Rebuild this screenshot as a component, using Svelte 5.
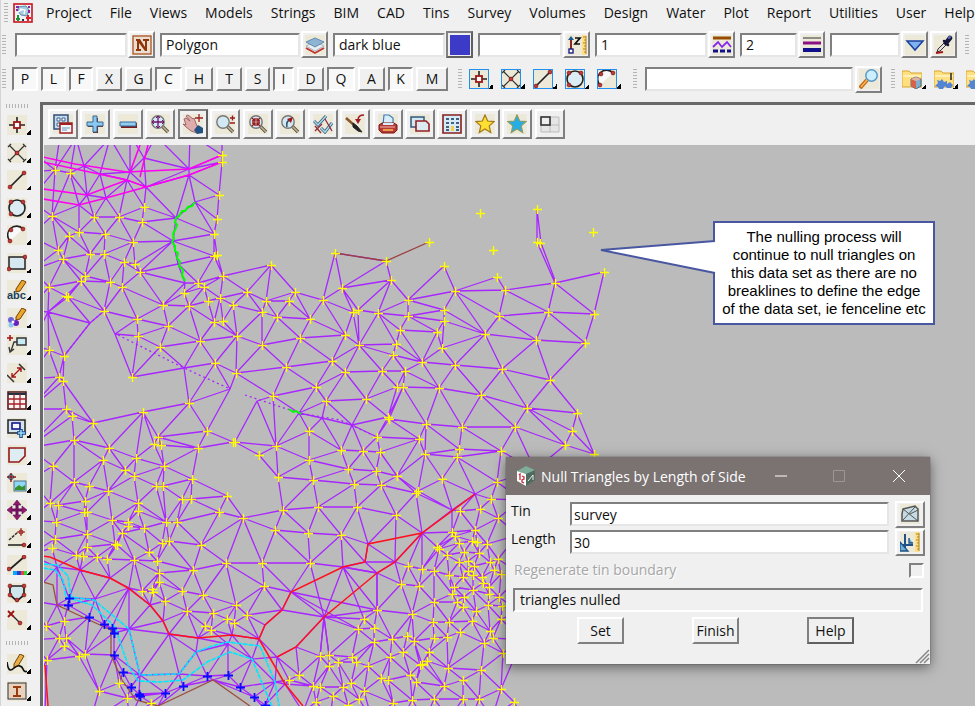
<script>
  const menus = [
    "Project", "File", "Views", "Models", "Strings", "BIM", "CAD", "Tins", "Survey",
    "Volumes", "Design", "Water", "Plot", "Report", "Utilities", "User", "Help",
  ];

  // Attribute bar: a text box and the picker next to it
  let attributes = [
    { label: "Name", value: "", width: 112, icon: "name" },
    { label: "Model", value: "Polygon", width: 140, icon: "layers" },
    { label: "Colour", value: "dark blue", width: 112, icon: "swatch" },
    { label: "Height", value: "", width: 84, icon: "height" },
    { label: "Line style", value: "1", width: 112, icon: "linestyle" },
    { label: "Weight", value: "2", width: 57, icon: "weight" },
    { label: "Tinable", value: "", width: 70, icon: "down" },
  ];

  let snaps = [
    { key: "P", width: 26, on: true },
    { key: "L", width: 25, on: true },
    { key: "F", width: 24, on: true },
    { key: "X", width: 26, on: false },
    { key: "G", width: 27, on: false },
    { key: "C", width: 27, on: true },
    { key: "H", width: 28, on: false },
    { key: "T", width: 26, on: false },
    { key: "S", width: 25, on: false },
    { key: "I", width: 21, on: true },
    { key: "D", width: 27, on: false },
    { key: "Q", width: 28, on: true },
    { key: "A", width: 27, on: false },
    { key: "K", width: 25, on: true },
    { key: "M", width: 32, on: false },
  ];

  const cadTools = ["point", "cross", "line", "circle", "arc"];
  const folders = ["folderbox", "foldergear", "foldergear"];
  const viewTools = [
    "views", "plus", "minus", "zoomfit", "pan", "zoomscale", "zoomin", "zoomprev",
    "toggle", "brush", "print", "copy", "grid", "star", "bluestar", "tile",
  ];
  const sideTools = [
    "point", "cross", "line", "circle", "arc", "rect", "text", "colour", "leader", "dimension",
    "table", "boxplus", "polygon", "image", "move", "offset", "linecolour", "shield", "delete",
  ];
  const editTools = ["pencil", "interface"];

  const beige = '<rect width="20" height="20" fill="#ece9d8"/>';
  const dot = (x, y) => `<circle cx="${x}" cy="${y}" r="1.9" fill="#c03c3c" stroke="#7a1010" stroke-width=".7"/>`;
  const lens = '<path d="M12 12l6 6" stroke="#555" stroke-width="3.4"/><path d="M12 12l6 6" stroke="#c9b183" stroke-width="1.6"/><circle cx="8" cy="8" r="6.2" fill="#d2e8f4" stroke="#777" stroke-width="1.4"/>';
  const folder = '<path d="M0 2h7l2 2h11v14H0z" fill="#ffe080" stroke="#d9a52c"/><path d="M1 7h18" stroke="#fff0b8" stroke-width="2"/>';
  const starPath = "M10 1l2.7 6 6.3.6-4.800 4.300 1.500 6.600L10 15l-5.700 3.500 1.500-6.600L1 7.600 7.300 7z";

  const icons = {
    logo: '<rect x="1" y="1" width="18" height="18" fill="#eef3f6" stroke="#c8141e" stroke-width="1.6"/><path d="M5 4l8-1 3 4-2 6-6-1-3-4z" fill="#a5cde0" stroke="#5b8faa"/><path d="M7 6l5 1-1 4M5 9l5-3" stroke="#fff" stroke-width="1.4" fill="none"/><path d="M3 4h3M3 7h2M15 4h2M16 7v3" stroke="#8d25a8" stroke-width="2"/><path d="M5 12v6M3 16h4" stroke="#1a9436" stroke-width="2"/><path d="M13 15h5M15 12v6" stroke="#df2027" stroke-width="2"/><path d="M9 17h2" stroke="#234" stroke-width="2"/>',
    name: beige + '<rect x="1" y="1" width="18" height="18" fill="#eaded2" stroke="#a74716" stroke-width="1.2"/><path d="M4 4h4l5 8V6h-2V4h6v2h-2v10h-2L7 8v6h2v2H4v-2h1V6H4z" fill="#8f3507"/>',
    layers: beige + '<path d="M1 13l9 5 9-5" fill="none" stroke="#c23330" stroke-width="1.800"/><path d="M1 11l9-4 9 4-9 5z" fill="#e9f0f4" stroke="#aab8c4"/><path d="M1 7l9-4 9 4-9 5z" fill="#8eb4d4" stroke="#638cb0"/>',
    swatch: '<rect width="20" height="20" fill="#3b3bc8"/>',
    height: beige + '<path d="M4 4v11" stroke="#7b1212" stroke-width="1.800"/><path d="M1 5l3-4 3 4z" fill="#1c5a8c"/><rect x="2" y="14" width="4" height="4" fill="#fff" stroke="#10107a" stroke-width="1.300"/><path d="M8 3h5L8 9h5" fill="none" stroke="#111" stroke-width="1.700"/><path d="M15 0h4v20h-4z" fill="#ffe08a"/><path d="M19 1v18M16 2h3M17 5h2M16 8h3M17 11h2M16 14h3M17 17h2" stroke="#b38318"/>',
    linestyle: beige + '<path d="M1 3h18" stroke="#994c00" stroke-width="3"/><path d="M1 12l5-5 4 5 5-5 4 5" fill="none" stroke="#8426f0" stroke-width="1.800"/><path d="M1 16h5m2 0h5m2 0h4" stroke="#10108c" stroke-width="3"/>',
    weight: beige + '<path d="M1 3h18" stroke="#333"/><path d="M1 8h18" stroke="#8b1085" stroke-width="3"/><path d="M1 15h18" stroke="#10108c" stroke-width="4"/>',
    down: beige + '<path d="M2 6h16l-8 9z" fill="#80b2f0" stroke="#1b409f" stroke-width="1.500"/>',
    dropper: beige + '<path d="M3 17l1-3 7-7 2 2-7 7z" fill="#eadede" stroke="#333"/><path d="M10 6l4 4" stroke="#161638" stroke-width="2.500" stroke-linecap="round"/><path d="M12 8l4-5" stroke="#161638" stroke-width="4.500" stroke-linecap="round"/><path d="M15 3l1-1" stroke="#5c6cc8" stroke-width="2" stroke-linecap="round"/><path d="M2 18l7-1" stroke="#a3161e" stroke-width="2"/>',
    search: beige + '<path d="M8 11l-7 8" stroke="#c16912" stroke-width="4"/><path d="M8 11l-6 7" stroke="#ffb355" stroke-width="1.500"/><circle cx="12.500" cy="6.500" r="5.700" fill="#cdeeff" stroke="#5799cb" stroke-width="1.500"/>',
    point: beige + '<path d="M10 2v16M2 10h16" stroke="#222" stroke-width="1.600"/><rect x="7" y="7" width="6" height="6" fill="#fff" stroke="#a01616" stroke-width="1.800"/>',
    cross: beige + '<path d="M3 3l14 14M17 3L3 17M1 4l3-3M16 1l3 3M1 16l3 3M16 19l3-3" stroke="#333" stroke-width="1.200"/>' + dot(10, 10),
    line: beige + '<path d="M3 17L17 3" stroke="#222" stroke-width="1.700"/>' + dot(3, 17) + dot(17, 3),
    circle: beige + '<circle cx="10" cy="10" r="8" fill="#dcecf5" stroke="#222" stroke-width="1.600"/>' + dot(4, 4) + dot(16, 4) + dot(4, 16),
    arc: beige + '<path d="M3 16A8 8 0 0 1 16 4" fill="#f7f9fb" stroke="#222" stroke-width="1.600"/>' + dot(3, 16) + dot(4, 5) + dot(16, 4),
    rect: beige + '<rect x="2" y="4" width="16" height="12" fill="#d5e7ef" stroke="#222" stroke-width="1.500"/>' + dot(18, 4) + dot(2, 16),
    text: beige + '<path d="M9 9l6-9 4 2-6 9-4 1z" fill="#eaa52a" stroke="#704004"/><text x="0" y="19" font-family="Liberation Sans" font-weight="bold" font-size="11" fill="#173f63">abc</text>',
    colour: beige + '<path d="M9 9l6-9 4 2-6 9-4 1z" fill="#eaa52a" stroke="#704004"/><circle cx="4" cy="12" r="3" fill="#6a63d9"/><circle cx="9" cy="15" r="3" fill="#6a20c0"/><circle cx="4" cy="17" r="2.500" fill="#8cc8f7"/><circle cx="6" cy="14" r="1.500" fill="#fff"/>',
    leader: beige + '<path d="M3 0v6M0 3h6" stroke="#a31111" stroke-width="1.500"/><rect x="10" y="3" width="9" height="7" fill="#c9eaf4" stroke="#333" stroke-width="1.500"/><path d="M10 7H7l-3 9M2 12l1 5 4-3" fill="none" stroke="#333" stroke-width="1.300"/>',
    dimension: beige + '<path d="M12 1l6 6M0 12l7 7" stroke="#333" stroke-width="1.500"/><path d="M5 14l9-9M5 10v4h4M10 5h4v4" fill="none" stroke="#a81515" stroke-width="1.400"/>',
    table: beige + '<path d="M1 2h18v17H1z" fill="#fff3ef" stroke="#4a1010" stroke-width="1.500"/><path d="M1 4h18" stroke="#203040" stroke-width="2"/><path d="M7 4v15M13 4v15M1 9h18M1 14h18" stroke="#a31f2a" stroke-width="1.300"/>',
    boxplus: beige + '<rect x="1" y="2" width="17" height="13" fill="#d4e5ee" stroke="#222" stroke-width="1.500"/><rect x="5" y="5" width="8" height="6" fill="#f6f6ff" stroke="#16168a" stroke-width="1.600"/><path d="M14 11v9M10 15h9" stroke="#164a8b" stroke-width="3.500"/><path d="M14 12v7M11 15h7" stroke="#9edbfa" stroke-width="1.500"/>',
    polygon: beige + '<path d="M2 3h16v8l-6 6H2z" fill="#deedf1" stroke="#941818" stroke-width="1.600"/>',
    image: beige + '<path d="M4 0v9M0 4h9" stroke="#8d1717" stroke-width="1.500"/><circle cx="4" cy="4" r="2.500" fill="none" stroke="#204060"/><rect x="7" y="8" width="12" height="10" fill="#8fd7f7" stroke="#527084"/><path d="M8 15l4-3 3 2 3-2v5H8z" fill="#37922b"/>',
    move: beige + '<path d="M10 3v14M3 10h14" stroke="#70105e" stroke-width="3"/><path d="M10 0l4 5H6zM10 20l4-5H6zM0 10l5-4v8zM20 10l-5-4v8z" fill="#991667" stroke="#4a1466" stroke-width=".6"/>',
    offset: beige + '<path d="M2 12l9-8" stroke="#333" stroke-dasharray="3 1" stroke-width="1.500"/><path d="M1 17h16" stroke="#333" stroke-width="1.700"/><path d="M14 0v8M10 4h8" stroke="#941414"/><circle cx="14" cy="4" r="2" fill="none" stroke="#941414"/>' + dot(17, 17),
    linecolour: beige + '<path d="M2 15L17 2" stroke="#222" stroke-width="1.700"/><path d="M6 16h4v4H6z" fill="#08a6ff"/><path d="M10 16h4v4h-4z" fill="#303cc4"/><path d="M14 16h3v4h-3z" fill="#ef3d4d"/><path d="M17 16h3v4h-3z" fill="#20df2b"/>' + dot(2, 14) + dot(17, 2),
    shield: beige + '<path d="M3 3h14v9l-7 6-7-6z" fill="#cfe6ec" stroke="#222" stroke-width="1.700"/>' + dot(3, 3) + dot(17, 3) + dot(10, 17) + dot(3, 12) + dot(17, 12),
    delete: beige + '<path d="M1 1l6 6M7 1L1 7" stroke="#961111" stroke-width="1.800"/><path d="M7 7l5 5" stroke="#222" stroke-width="1.200"/>' + dot(13, 13),
    pencil: beige + '<path d="M7 10l6-10 4 2-6 10-4 2z" fill="#eaae43" stroke="#6d4412"/><path d="M0 8c1 8 3 10 7 6s8-2 9 1 3 3 4 2" fill="none" stroke="#111" stroke-width="1.700"/>',
    interface: beige + '<rect x="1" y="2" width="18" height="16" fill="#e8d2be" stroke="#333"/><path d="M6 5h8v2h-3v7h3v2H6v-2h3V7H6z" fill="#9c3c0e"/>',
    views: beige + '<rect x="1" y="1" width="14" height="14" fill="#c5ddec" stroke="#334f78" stroke-width="1.500"/><path d="M4 4h3v3H4zM9 4h3v3H9zM4 9h3v3H4z" fill="#fff" stroke="#42638c"/><rect x="7" y="9" width="12" height="10" fill="#eef5fb" stroke="#a02020" stroke-width="1.500"/><path d="M7 10h12" stroke="#a02020" stroke-width="2"/><path d="M9 14h8M9 16h5" stroke="#6f98b5"/>',
    plus: beige + '<path d="M8 4h5v5h5v4h-5v6H8v-6H3V9h5z" fill="#7a1b21"/><path d="M8 2h4v6h6v4h-6v6H8v-6H2V8h6z" fill="#8ac9ef" stroke="#366993"/>',
    minus: beige + '<path d="M3 9h16v5H3z" fill="#7a1b21"/><path d="M2 8h16v4H2z" fill="#91cef0" stroke="#3b6c95"/>',
    zoomfit: beige + lens + '<path d="M8 3v10M3 8h10" stroke="#70106e" stroke-width="1.300"/><path d="M6 4l2-2 2 2M6 12l2 2 2-2M4 6L2 8l2 2M12 6l2 2-2 2" fill="none" stroke="#70106e"/>',
    pan: beige + '<path d="M1 5l2-1 4 3-4-5 2-1 5 4 1-1 3 8 3 3-3 4-6-2-5-4-3-3 3 1z" fill="#dfabab" stroke="#8f5051" stroke-width=".8"/><path d="M11 16l4-5 5 3v5l-6 1z" fill="#235282"/><path d="M16 0v8M12 4h8" stroke="#9a2020" stroke-width="1.300"/>',
    zoomscale: beige + lens + '<path d="M15 4h5M17.500 1.500v5M15 9h5" stroke="#9a1919" stroke-width="1.300"/>',
    zoomin: beige + lens + '<path d="M4 4l3 3M12 4L9 7M4 12l3-3M12 12L9 9M7 4v3H4M9 4v3h3M4 9h3v3M12 9H9v3" stroke="#981515" stroke-width="1.300" fill="none"/>',
    zoomprev: beige + lens + '<path d="M7 13c-1-4 0-6 3-7" stroke="#264d6a" stroke-width="1.500" fill="none"/><path d="M7 5l6-2-2 6z" fill="#9e1818"/>',
    toggle: beige + '<path d="M1 7l4 4 8-9M8 14l4 4 7-9" stroke="#365875" stroke-width="3" fill="none"/><path d="M1 7l4 4 8-9M8 14l4 4 7-9" stroke="#a8dcf0" stroke-width="1.500" fill="none"/><path d="M12 5l7 12M2 17l7-7M2 12l6 7" stroke="#922c3a" stroke-width="1.300"/>',
    brush: beige + '<path d="M1 4l8 7" stroke="#8a5428" stroke-width="2.500"/><path d="M8 9l4 3 5 6-4-1-5-4z" fill="#222" stroke="#222"/><path d="M19 1c-4 0-6 2-6 5" fill="none" stroke="#a11c25" stroke-width="1.500"/><path d="M10 5l3 5 3-5z" fill="#a11c25"/>',
    print: beige + '<path d="M5 11l1-10h5l4 3v7z" fill="#d8eefc" stroke="#3f7cb4" stroke-width="1.200"/><path d="M1 11l3-2h12l3 2v5l-3 3H4l-3-3z" fill="#b9393a" stroke="#7a1616"/><path d="M5 9h11l-1 2H5z" fill="#d8eefc"/><path d="M2 13h15" stroke="#f0b8ae"/><path d="M5 16h10" stroke="#f6c549" stroke-width="1.500"/>',
    copy: beige + '<rect x="1" y="3" width="13" height="10" fill="#d3e7ef" stroke="#31587e" stroke-width="1.500"/><path d="M6 7h10l3 3v7H6z" fill="#dcebf0" stroke="#942027" stroke-width="1.600"/>',
    grid: beige + '<path d="M1 1h18v18H1z" fill="#d6ebf7" stroke="#852020" stroke-width="1.600"/><path d="M4 5h3M9 5h3M14 5h3M4 9h3M9 9h3M14 9h3M4 13h3M14 13h3M4 16h3M14 16h3" stroke="#43607d" stroke-width="2"/><path d="M9 12h3v5H9z" fill="#f5cf45"/>',
    star: beige + `<path d="${starPath}" fill="#ffdf31" stroke="#a17817" stroke-width="1.200"/>`,
    bluestar: beige + `<path d="${starPath}" fill="#23aee7" stroke="#8d9a63" stroke-width="1.200"/>`,
    tile: '<path d="M1 3h18v15H1zM10 3v15M1 11h18" fill="#e5e5e5" stroke="#bbb"/><rect x="1" y="3" width="9" height="8" fill="#eee" stroke="#333" stroke-width="1.600"/>',
    folderbox: folder + '<path d="M9 10l5-2 5 2v7l-5 3-5-3z" fill="#7eafd2" stroke="#476b91"/><path d="M9 10l5 2v8l-5-3z" fill="#da6148"/><path d="M9 10l5-2 5 2-5 2z" fill="#e6b29a"/>',
    foldergear: folder + '<path d="M1 17l3-3-1-3 3 1 2-2 2 3 3-1v3l3-2 3 3-2 3h-4l-2-2-2 3H5l-1-2z" fill="#5385d5"/><path d="M17 4v7" stroke="#222" stroke-width="1.500"/>',
    tin: beige + '<path d="M3 5l12-3 3 3v12H2v-7z" fill="#c6dce5" stroke="#555" stroke-width="1.500"/><path d="M3 5l15 12M15 3L3 16M10 10l8-4" stroke="#555"/>',
    measure: beige + '<path d="M5 2v16M0 13h13" stroke="#1e5288" stroke-width="2"/><path d="M0 10l8 9H0zM9 6v5h4" fill="#6ab0d8" stroke="#1e5288" stroke-width="1.300"/><path d="M15 0h4v20h-4z" fill="#ffdf83"/><path d="M19 1v18M16 2h3M17 5h2M16 8h3M17 11h2M16 14h3M17 17h2" stroke="#b38318"/>',
    app: '<path d="M1 5l9-5 9 4v10l-9 6-9-5z" fill="#4f6b60"/><path d="M1 5l9-5 9 4-9 4z" fill="#80ad98"/><path d="M1 5l9 3v12l-9-5z" fill="#fff"/><path d="M3 9l1-1v6M6 10l2 1v2l-2 1v2l2 1" fill="none" stroke="#d0273b" stroke-width="1.300"/><path d="M12 15l5-6v5" stroke="#e4eee9" fill="none"/>',
  };

  // Survey points, drawn as yellow crosses and used as tin vertices
  const points = [
    [222,155],[222,162],[219,195],[217,219],[214,234],[214,256],[217,255],[55,170],[70,173],[144,207],
    [119,217],[94,217],[52,216],[142,222],[79,232],[69,236],[105,234],[133,242],[58,250],[63,259],
    [90,254],[104,254],[124,262],[135,264],[140,272],[85,276],[81,281],[110,282],[122,287],[49,287],
    [66,296],[68,297],[104,311],[137,319],[168,326],[138,336],[163,305],[184,293],[198,283],[204,287],
    [189,306],[208,301],[220,298],[223,276],[233,305],[214,322],[223,321],[247,292],[262,312],[266,301],
    [277,317],[289,301],[295,292],[271,265],[310,319],[323,300],[335,253],[300,338],[237,336],[200,341],
    [386,261],[444,266],[391,280],[342,288],[455,291],[497,277],[505,290],[555,283],[604,272],[408,300],
    [353,312],[358,310],[378,313],[408,316],[444,310],[444,321],[499,316],[548,312],[594,314],[345,335],
    [359,345],[400,330],[437,332],[485,334],[396,344],[393,355],[442,348],[422,362],[536,340],[585,343],
    [332,361],[345,372],[382,371],[405,371],[455,365],[502,369],[550,380],[397,387],[403,387],[439,388],
    [49,350],[64,356],[160,347],[262,345],[132,377],[59,377],[63,381],[215,363],[236,373],[286,367],
    [316,387],[273,396],[326,401],[189,403],[143,412],[66,409],[72,416],[93,423],[74,440],[109,448],
    [103,460],[136,458],[158,437],[154,444],[161,445],[207,431],[198,448],[233,442],[235,442],[259,455],
    [276,446],[309,431],[309,460],[278,477],[313,480],[318,507],[283,510],[53,466],[125,470],[134,476],
    [164,466],[74,482],[89,486],[108,491],[156,486],[163,486],[192,479],[182,499],[191,499],[227,496],
    [219,512],[243,518],[50,503],[58,505],[85,501],[84,512],[87,512],[138,503],[138,511],[112,520],
    [128,522],[128,526],[166,522],[177,522],[56,522],[144,528],[366,399],[481,395],[527,408],[577,413],
    [388,417],[389,419],[426,424],[462,427],[515,427],[572,431],[565,445],[594,454],[377,437],[419,439],
    [341,450],[363,451],[380,452],[425,454],[459,449],[457,457],[501,451],[348,469],[376,471],[397,476],
    [354,484],[381,485],[442,479],[497,482],[418,491],[416,493],[491,499],[480,509],[460,511],[357,507],
    [396,515],[498,518],[341,535],[475,530],[452,532],[455,536],[308,533],[310,563],[408,566],[422,569],
    [434,571],[401,584],[419,586],[434,602],[377,610],[412,614],[433,622],[449,622],[364,619],[374,628],
    [358,629],[374,642],[392,639],[407,636],[414,641],[434,638],[447,637],[460,632],[472,621],[390,657],
    [403,652],[429,652],[320,656],[329,655],[329,666],[338,662],[352,657],[356,662],[368,666],[420,665],
    [422,664],[427,661],[448,668],[481,670],[484,643],[503,653],[410,675],[416,682],[381,678],[388,680],
    [299,675],[289,680],[313,686],[320,687],[343,687],[351,683],[364,691],[359,699],[333,696],[316,702],
    [393,703],[412,700],[434,699],[444,686],[463,680],[463,699],[479,699],[501,689],[514,702],[348,705],
    [437,547],[439,549],[447,555],[459,543],[472,541],[477,542],[487,544],[464,552],[479,553],[498,559],
    [459,562],[468,561],[474,566],[490,562],[494,570],[501,574],[449,575],[463,577],[468,571],[473,575],
    [482,577],[483,583],[489,587],[489,594],[454,587],[452,594],[457,602],[463,607],[464,597],[473,590],
    [476,611],[488,605],[499,597],[502,606],[501,619],[490,631],[493,638],[275,530],[87,534],[122,533],
    [55,539],[52,548],[87,547],[115,544],[117,545],[76,555],[83,556],[97,557],[107,559],[134,560],
    [149,552],[169,541],[162,543],[201,545],[157,561],[159,573],[159,582],[193,570],[226,563],[262,563],
    [264,586],[142,591],[152,589],[153,592],[165,601],[182,591],[203,595],[236,605],[187,611],[213,613],
    [227,619],[234,623],[247,615],[205,626],[211,630],[64,621],[46,626],[59,638],[66,638],[64,646],
    [79,656],[85,654],[47,660],[99,691],[119,683],[127,698],[151,703],
  ];

  // Points standing clear of the tin
  const loosePoints = [[480,213],[493,250],[593,232],[429,242],[537,209],[537,242],[540,243]];

  const creekPoints = [
    [69,598],[68,605],[89,617],[104,624],[112,628],[114,633],[114,655],[123,672],[131,687],[139,694],
    [140,696],[165,693],[183,686],[207,676],[228,675],[240,687],[254,697],[265,705],
  ];

  // String vertices and points outside the view that have no marker
  const hiddenPoints = [
    [60,136],[76,138],[110,138],[130,134],[156,136],[190,134],[222,140],[84,166],[100,174],[130,172],
    [127,180],[87,195],[106,198],[79,205],[144,158],[146,187],[189,169],[189,175],[195,202],[176,218],
    [173,241],[178,264],[185,283],[90,323],[48,312],[30,150],[30,172],[30,200],[30,236],[32,270],
    [28,310],[32,345],[28,379],[30,409],[28,448],[30,480],[28,520],[30,555],[28,600],[30,640],
    [30,690],[184,368],[230,389],[257,401],[299,413],[322,418],[115,334],[352,425],[452,510],[475,494],
    [422,533],[368,544],[365,562],[395,562],[343,567],[291,592],[282,610],[265,625],[259,639],[232,635],
    [198,638],[169,634],[163,621],[150,605],[129,588],[110,578],[80,570],[57,567],[95,599],[129,629],
    [140,675],[179,674],[196,652],[228,644],[252,659],[275,682],[324,617],[377,573],[296,647],[277,657],
    [285,684],[57,605],[158,706],[213,680],[303,712],[90,722],[330,718],[372,720],[403,718],[425,720],
    [449,718],[471,720],[492,718],[526,722],[535,470],[522,500],[518,535],[522,575],[520,612],[522,640],
    [276,722],[130,720],[45,712],
  ];

  // Areas in which triangles have been nulled
  const voids = [
    [[222,140],[219,195],[217,219],[217,255],[223,276],[271,265],[295,292],[323,300],[335,253],[386,261],[391,280],[408,300],[444,266],[455,291],[497,277],[505,290],[555,283],[604,272],[594,314],[585,343],[550,380],[577,413],[594,454],[640,454],[640,140]],
    [[64,356],[90,323],[104,311],[115,334],[132,377],[184,368],[189,403],[143,412],[93,423],[63,381]],
    [[198,448],[235,442],[259,455],[278,477],[283,510],[243,518],[227,496],[192,479]],
    [[230,389],[236,373],[273,396],[257,401],[235,442],[207,431]],
    [[47,660],[79,656],[99,691],[90,722],[45,712]],
    [[213,680],[254,705],[265,720],[158,720],[158,706]],
    [[282,610],[324,617],[296,647],[277,657],[259,639]],
  ];
  const maxSide = 58;

  function inside([x, y], polygon) {
    let hit = false;
    for (let i = 0, j = polygon.length - 1; i < polygon.length; j = i++) {
      const [xi, yi] = polygon[i];
      const [xj, yj] = polygon[j];
      if (yi > y !== yj > y && x < ((xj - xi) * (y - yi)) / (yj - yi) + xi) hit = !hit;
    }
    return hit;
  }

  function makeTriangle(pts, a, b, c) {
    const [ax, ay] = pts[a];
    const [bx, by] = pts[b];
    const [cx, cy] = pts[c];
    const d = 2 * (ax * (by - cy) + bx * (cy - ay) + cx * (ay - by));
    if (d === 0) return null;
    const a2 = ax * ax + ay * ay;
    const b2 = bx * bx + by * by;
    const c2 = cx * cx + cy * cy;
    const x = (a2 * (by - cy) + b2 * (cy - ay) + c2 * (ay - by)) / d;
    const y = (a2 * (cx - bx) + b2 * (ax - cx) + c2 * (bx - ax)) / d;
    return { v: [a, b, c], x, y, r: (ax - x) ** 2 + (ay - y) ** 2 };
  }

  // Bowyer-Watson triangulation
  function triangulate(source) {
    const n = source.length;
    const pts = [...source, [-9000, -8000], [9500, -8100], [300, 12000]];
    let tris = [makeTriangle(pts, n, n + 1, n + 2)];
    for (let i = 0; i < n; i++) {
      const [px, py] = pts[i];
      const edges = new Map();
      const keep = [];
      for (const t of tris) {
        if ((px - t.x) ** 2 + (py - t.y) ** 2 >= t.r) {
          keep.push(t);
          continue;
        }
        for (let k = 0; k < 3; k++) {
          const e = [t.v[k], t.v[(k + 1) % 3]].sort((p, q) => p - q);
          const id = e.join();
          if (edges.has(id)) edges.delete(id);
          else edges.set(id, e);
        }
      }
      for (const [a, b] of edges.values()) {
        const t = makeTriangle(pts, a, b, i);
        if (t) keep.push(t);
      }
      tris = keep;
    }
    return tris.filter((t) => t.v.every((v) => v < n)).map((t) => t.v);
  }

  function tinPath() {
    const seen = new Set();
    const pts = [...points, ...creekPoints, ...hiddenPoints].filter(([x, y]) => {
      const id = `${x},${y}`;
      return seen.has(id) ? false : seen.add(id);
    });
    const edges = new Set();
    for (const v of triangulate(pts)) {
      const [a, b, c] = v.map((i) => pts[i]);
      const centre = [(a[0] + b[0] + c[0]) / 3, (a[1] + b[1] + c[1]) / 3];
      const longest = Math.max(
        Math.hypot(a[0] - b[0], a[1] - b[1]),
        Math.hypot(b[0] - c[0], b[1] - c[1]),
        Math.hypot(c[0] - a[0], c[1] - a[1])
      );
      if (longest > maxSide || voids.some((p) => inside(centre, p))) continue;
      for (let k = 0; k < 3; k++) {
        const [p, q] = [v[k], v[(k + 1) % 3]].sort((m, o) => m - o);
        edges.add(`M${pts[p]}L${pts[q]}`);
      }
    }
    return [...edges].join("");
  }

  const crosses = (list) => list.map(([x, y]) => `M${x - 4} ${y + 0.5}h9M${x + 0.5} ${y - 4}v9`).join("");

  const tin = tinPath();
  const yellow = crosses([...points, ...loosePoints]);
  const blue = crosses(creekPoints);

  let tinName = "survey";
  let sideLength = "30";
  let search = "";
  let regenerate = false;
</script>

{#snippet icon(name)}
  <svg class="icon" viewBox="0 0 20 20" aria-hidden="true">{@html icons[name]}</svg>
{/snippet}

<div class="app">
  <nav class="menubar">
    <span class="grip"></span>
    <span class="logo">{@render icon("logo")}</span>
    {#each menus as menu}
      <button class="menu">{menu}</button>
    {/each}
  </nav>

  <div class="attributes">
    <span class="grip"></span>
    {#each attributes as item}
      <div class="attribute">
        <input class="field" aria-label={item.label} bind:value={item.value} style="width: {item.width}px" />
        <button class="raised pick" class:dark={item.icon === "swatch"} aria-label={"Pick " + item.label}>
          {@render icon(item.icon)}
        </button>
      </div>
    {/each}
    <button class="raised pick dropper" aria-label="Same as">{@render icon("dropper")}</button>
    <span class="grip end"></span>
  </div>

  <div class="snapbar">
    <span class="grip"></span>
    <div class="snaps">
      {#each snaps as snap}
        <button class="raised snap" class:on={snap.on} aria-pressed={snap.on} style="width: {snap.width}px">{snap.key}</button>
      {/each}
    </div>
    <span class="grip"></span>
    <div class="cad">
      {#each cadTools as tool}
        <button class="tool framed" aria-label={tool}>{@render icon(tool)}</button>
      {/each}
    </div>
    <span class="grip"></span>
    <input class="field search" aria-label="Search" bind:value={search} />
    <button class="raised pick" aria-label="Find">{@render icon("search")}</button>
    <span class="grip folders-grip"></span>
    <div class="cad">
      {#each folders as tool}
        <button class="tool" aria-label={tool}>{@render icon(tool)}</button>
      {/each}
    </div>
  </div>

  <div class="workspace">
    <aside class="sidebar">
      <span class="grip flat"></span>
      <div class="side-tools">
        {#each sideTools as tool}
          <button class="tool" aria-label={tool}>{@render icon(tool)}</button>
        {/each}
      </div>
      <span class="grip flat"></span>
      <div class="edit-tools">
        {#each editTools as tool}
          <button class="tool" aria-label={tool}>{@render icon(tool)}</button>
        {/each}
      </div>
    </aside>

    <main class="view">
      <div class="viewbar">
        {#each viewTools as tool}
          <button class="raised viewtool" class:dark={tool === "pan"} aria-label={tool}>{@render icon(tool)}</button>
        {/each}
      </div>

      <div class="plan">
        <svg class="drawing" aria-label="Plan view">
          <g transform="translate(-44 -145)" fill="none">
            <g stroke="#a826ff" stroke-width="1.3">
              <path d={tin} />
              <path d="M537 209L537 242M537 209L541 243M537 242L555 283M541 243L556 283M291 592L377 610M291 592L358 629M324 617L377 610M377 573V610M343 567L377 573M324 617L320 656M324 617L329 655" />
              <path d="M64 356L90 323L104 311M118 335L184 368L230 389M245 395L299 413L340 420L377 437" stroke-dasharray="2 3" />
            </g>
            <path stroke="#ff00f0" stroke-width="1.6" d="M43 157L75 164L127 172L189 169L222 155M43 162L127 180L146 187L189 175L222 162M43 189L87 195L127 180M43 199L79 205L106 198L146 187M130 172L140 145M140 177L148 145" />
            <path stroke="#9b4040" stroke-width="1.3" d="M335 253L386 261L429 242" />
            <path stroke="#9b5040" stroke-width="1.3" d="M43 582L53 585L57 605L89 620L111 630L111 655L122 680L136 700L158 706L213 680L250 706" />
            <path stroke="#ff1020" stroke-width="1.5" d="M43 556L50 557L80 570L110 578L128 588L150 605L163 621L169 634L198 638L232 635L259 639L265 625L282 610L291 592L343 567L365 562L368 544L422 533L475 494M277 657L296 647L324 617L377 573L395 562L422 533M259 639L285 684L303 706M45 665L48 706" />
            <path stroke="#00e8ff" stroke-width="1.6" stroke-dasharray="5 1" d="M43 564L57 565L68 576L71 597L94 600L129 629L140 675L179 674L196 652L212 646L228 642L260 646L275 682L279 706M43 568L55 570L63 580L66 597L92 605L115 627L128 665L138 681L160 682L183 680L207 662L230 652L252 659L265 690L272 706" />
            <path stroke="#00ff00" stroke-width="2" d="M195 202L192 206L188 207L185 211L182 211L179 216L176 218L175 222L177 225L175 230L173 234L174 239L172 242L175 246L175 251L178 253L177 258L180 262L179 266L183 270L182 275L185 281M289 409L293 412L296 411L301 414" />
            <path stroke="#ffff00" stroke-width="1.4" d={yellow} />
            <path stroke="#0a0aff" stroke-width="1.8" d={blue} />
          </g>
        </svg>

        <div class="callout">
          <svg class="pointer" viewBox="0 0 117 36" aria-hidden="true">
            <path d="M116 2L2 11L116 34" fill="#fff" stroke="#4957a0" stroke-width="2" />
          </svg>
          The nulling process will<br />continue to null triangles on<br />this data set as there are no<br />breaklines to define the edge<br />of the data set, ie fenceline etc
        </div>

        <section class="dialog" aria-label="Null Triangles by Length of Side">
          <header class="titlebar">
            {@render icon("app")}
            <h1>Null Triangles by Length of Side</h1>
            <button class="caption" aria-label="Minimise">
              <svg viewBox="0 0 14 14"><path d="M1 7h12" /></svg>
            </button>
            <button class="caption off" aria-label="Maximise" disabled>
              <svg viewBox="0 0 14 14"><path d="M1.500 1.500h11v11h-11z" /></svg>
            </button>
            <button class="caption" aria-label="Close">
              <svg viewBox="0 0 14 14"><path d="M1 1l12 12M13 1L1 13" /></svg>
            </button>
          </header>
          <div class="panel">
            <div class="row">
              <label for="tin">Tin</label>
              <input id="tin" class="field" bind:value={tinName} />
              <button class="raised choose" aria-label="Choose tin">{@render icon("tin")}</button>
            </div>
            <div class="row">
              <label for="length">Length</label>
              <input id="length" class="field" bind:value={sideLength} />
              <button class="raised choose" aria-label="Measure length">{@render icon("measure")}</button>
            </div>
            <div class="row option">
              <label for="regenerate">Regenerate tin boundary</label>
              <input id="regenerate" type="checkbox" bind:checked={regenerate} disabled />
            </div>
            <output class="message">triangles nulled</output>
            <div class="actions">
              <button class="raised">Set</button>
              <button class="raised">Finish</button>
              <button class="raised dark">Help</button>
            </div>
          </div>
          <svg class="resize" viewBox="0 0 16 16" aria-hidden="true">
            <path d="M2 15L15 2M6 15L15 6M10 15L15 10" stroke="#888" stroke-width="1.500" />
          </svg>
        </section>
      </div>
    </main>
  </div>
</div>

<style>
  :global(body) {
    margin: 0;
    overflow: hidden;
  }

  .app {
    display: flex;
    flex-direction: column;
    box-sizing: border-box;
    height: 100vh;
    border-left: 1px solid #d4d4d4;
    background: #f0f0f0;
    color: #111;
    font-family: "Open Sans", "Noto Sans", sans-serif;
    font-size: 14px;
    overflow: hidden;
  }

  button,
  input {
    box-sizing: border-box;
    margin: 0;
    padding: 0;
    border: 0;
    border-radius: 0;
    background: none;
    color: inherit;
    font: inherit;
    flex-shrink: 0;
  }

  .icon {
    display: block;
    width: 20px;
    height: 20px;
    flex-shrink: 0;
  }

  .grip {
    width: 4px;
    height: 20px;
    flex-shrink: 0;
    background: repeating-linear-gradient(#b4b4b4 0 1px, #f0f0f0 1px 3px);
  }

  .grip.flat {
    width: 24px;
    height: 4px;
    background: repeating-linear-gradient(90deg, #b4b4b4 0 1px, #f0f0f0 1px 3px);
  }

  .raised {
    display: flex;
    align-items: center;
    justify-content: center;
    border: 2px solid;
    border-color: #fff #808080 #808080 #fff;
    background: #f0f0f0;
  }

  .raised.dark {
    border-color: #808080 #606060 #606060 #808080;
  }

  .field {
    height: 24px;
    padding: 0 4px;
    border: 2px solid;
    border-color: #808080 #e6e6e6 #e6e6e6 #808080;
    background: #fff;
  }

  .menubar {
    display: flex;
    align-items: center;
    height: 25px;
    padding-left: 3px;
    flex-shrink: 0;
  }

  .logo {
    margin: 0 4px 0 5px;
  }

  .menu {
    padding: 0 9px;
    white-space: nowrap;
    line-height: 24px;
  }

  .attributes {
    display: flex;
    align-items: center;
    gap: 5px;
    height: 39px;
    padding-left: 1px;
    flex-shrink: 0;
  }

  .attributes .grip:first-child {
    margin-right: 4px;
  }

  .attribute {
    display: flex;
    align-items: center;
    gap: 1px;
  }

  .pick {
    width: 27px;
    height: 27px;
  }

  .dropper {
    margin-left: -3px;
  }

  .grip.end {
    margin-left: 3px;
  }

  .snapbar {
    display: flex;
    align-items: center;
    box-sizing: border-box;
    height: 38px;
    padding: 0 0 8px 1px;
    flex-shrink: 0;
  }

  .snaps {
    display: flex;
    gap: 3px;
    margin: 0 10px 0 6px;
  }

  .snap {
    height: 24px;
    line-height: 20px;
  }

  .snap.on {
    border-color: #808080 #fff #fff #808080;
    background: #f8f8f8;
  }

  .cad {
    display: flex;
    gap: 8px;
    margin: 0 12px 0 7px;
  }

  .tool {
    display: flex;
    width: 24px;
    height: 20px;
    background: linear-gradient(135deg, transparent 50%, #000 50%) right bottom / 5px 5px no-repeat;
  }

  .framed .icon {
    outline: 1px solid #2090f0;
    outline-offset: -1px;
  }

  .search {
    width: 208px;
    margin: 0 2px 0 8px;
  }

  .folders-grip {
    margin-left: 9px;
  }

  .workspace {
    display: flex;
    flex: 1;
    min-height: 0;
  }

  .sidebar {
    display: flex;
    flex-direction: column;
    width: 39px;
    padding-left: 5px;
    box-sizing: border-box;
    flex-shrink: 0;
  }

  .sidebar .grip {
    margin-top: 2px;
  }

  .side-tools {
    display: flex;
    flex-direction: column;
    justify-content: space-between;
    height: 515px;
    margin: 7px 0 9px 1px;
    flex-shrink: 0;
  }

  .edit-tools {
    display: flex;
    flex-direction: column;
    gap: 7px;
    margin: 9px 0 0 1px;
  }

  .view {
    display: flex;
    flex-direction: column;
    flex: 1;
    min-width: 0;
    border-top: 3px solid #696969;
    border-left: 3px solid #696969;
  }

  .viewbar {
    display: flex;
    justify-content: space-between;
    box-sizing: border-box;
    width: 522px;
    height: 40px;
    padding: 4px 0 0 5px;
    flex-shrink: 0;
  }

  .viewtool {
    width: 30px;
    height: 30px;
  }

  .plan {
    position: relative;
    flex: 1;
    margin-left: 1px;
    background: #bbb;
    overflow: hidden;
  }

  .drawing {
    display: block;
    width: 100%;
    height: 100%;
  }

  .callout {
    position: absolute;
    top: 76px;
    left: 669px;
    box-sizing: border-box;
    width: 222px;
    padding: 5px 0;
    border: 2px solid #4957a0;
    background: #fff;
    color: #000;
    font-family: "Liberation Sans", Arial, sans-serif;
    font-size: 15px;
    line-height: 18px;
    text-align: center;
    white-space: nowrap;
  }

  .pointer {
    position: absolute;
    top: 16px;
    left: -116px;
    width: 117px;
    height: 36px;
  }

  .dialog {
    position: absolute;
    top: 312px;
    left: 462px;
    width: 424px;
    background: #f0f0f0;
    box-shadow: 0 3px 12px rgba(0, 0, 0, 0.5), 0 0 1px #444;
  }

  .titlebar {
    display: flex;
    align-items: center;
    height: 38px;
    padding-left: 10px;
    background: #7a7372;
    color: #fff;
  }

  .titlebar h1 {
    flex: 1;
    margin: 0 0 0 5px;
    font-size: 14px;
    font-weight: 400;
    white-space: nowrap;
  }

  .caption {
    display: flex;
    align-items: center;
    justify-content: center;
    width: 58px;
    height: 38px;
  }

  .caption:last-child {
    width: 62px;
  }

  .caption svg {
    width: 14px;
    height: 14px;
    fill: none;
    stroke: #fff;
  }

  .caption.off svg {
    stroke: #9c9694;
  }

  .panel {
    padding: 5px 5px 20px;
  }

  .row {
    display: flex;
    align-items: center;
    gap: 6px;
    height: 28px;
  }

  .row label {
    width: 53px;
    padding-bottom: 6px;
    line-height: 20px;
  }

  .row .field {
    flex: 1;
    min-width: 0;
    padding: 0 2px;
  }

  .choose {
    width: 30px;
    height: 27px;
  }

  .option {
    justify-content: space-between;
    padding: 0 1px 0 3px;
    color: #a6a6a6;
    text-shadow: 1px 1px #fff;
  }

  .option label {
    width: auto;
    padding: 0;
  }

  .option input {
    appearance: none;
    width: 15px;
    height: 15px;
    border: 2px solid;
    border-color: #808080 #fff #fff #808080;
  }

  .message {
    display: block;
    margin: 4px 2px 0;
    padding: 0 5px;
    border: 2px solid;
    border-color: #808080 #fff #fff #808080;
    line-height: 20px;
  }

  .actions {
    display: flex;
    justify-content: space-between;
    margin: 5px 71px 0 66px;
  }

  .actions .raised {
    width: 47px;
    height: 27px;
  }

  .resize {
    position: absolute;
    right: 0;
    bottom: 0;
    width: 16px;
    height: 16px;
  }
</style>
